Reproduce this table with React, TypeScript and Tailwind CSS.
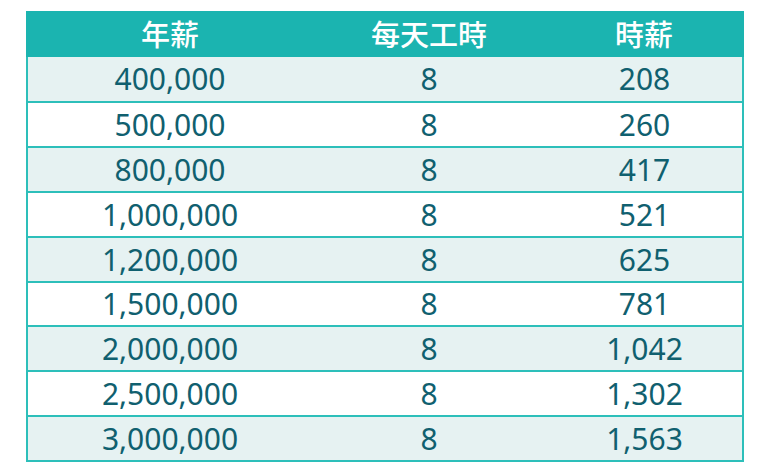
const rows = [
  ["400,000", "8", "208"],
  ["500,000", "8", "260"],
  ["800,000", "8", "417"],
  ["1,000,000", "8", "521"],
  ["1,200,000", "8", "625"],
  ["1,500,000", "8", "781"],
  ["2,000,000", "8", "1,042"],
  ["2,500,000", "8", "1,302"],
  ["3,000,000", "8", "1,563"],
]

export default function App() {
  return (
    <div className="min-h-screen w-full bg-white pl-[26px] pt-[11px] font-['Noto_Sans','Noto_Sans_CJK_TC',sans-serif]">
      <div className="w-[718px]">
        {/* header */}
        <div className="grid grid-cols-[288px_230px_200px] h-[45.6px] items-center bg-[#1bb4b0] text-white text-[29px] font-medium leading-none">
          <div className="text-center pt-[2px]">年薪</div>
          <div className="text-center pt-[2px]">每天工時</div>
          <div className="text-center pt-[2px]">時薪</div>
        </div>

        {/* body */}
        <div className="border-2 border-t-0 border-[#2dbfba]">
          {rows.map((r, i) => (
            <div
              key={r[0]}
              className={`grid grid-cols-[286px_230px_198px] h-[44.8px] items-center text-[30px] leading-none text-[#10606f] ${i > 0 ? "border-t-2 border-[#2dbfba]" : ""} ${i % 2 === 0 ? "bg-[#e6f2f2]" : "bg-white"}`}
            >
              <div className="text-center pt-[1px] -ml-[2px]">{r[0]}</div>
              <div className="text-center pt-[1px]">{r[1]}</div>
              <div className="text-center pt-[1px] ml-[3px]">{r[2]}</div>
            </div>
          ))}
        </div>
      </div>
    </div>
  )
}
